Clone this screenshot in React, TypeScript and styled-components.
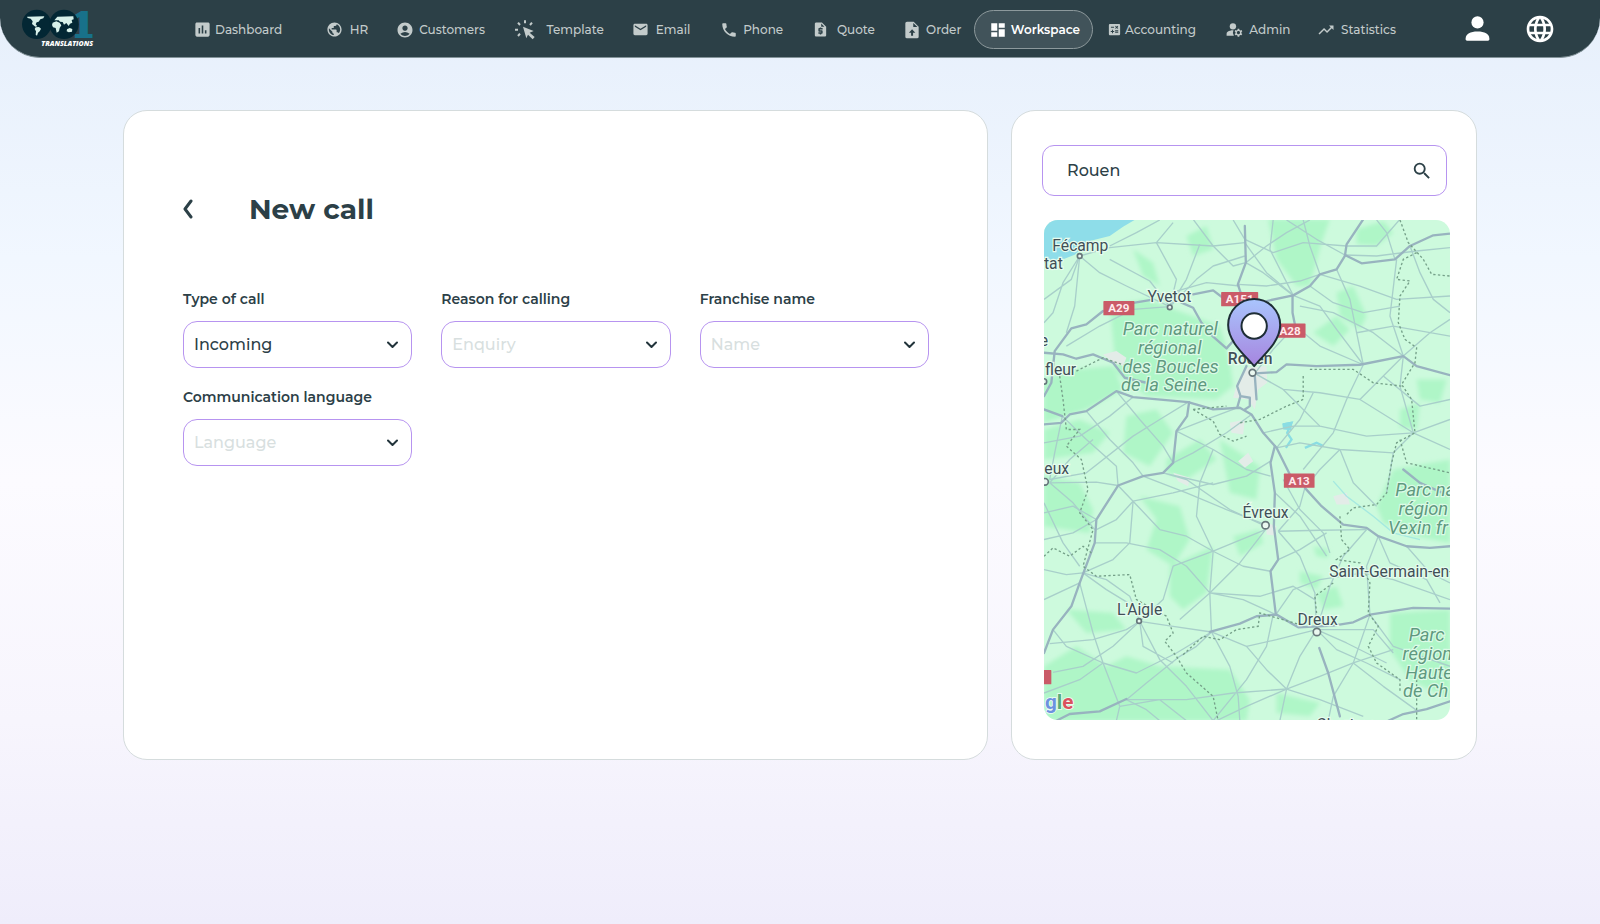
import React from "react";
import styled, { createGlobalStyle } from "styled-components";
import {
  MdAccountCircle,
  MdAssessment,
  MdCalculate,
  MdDashboard,
  MdEmail,
  MdLanguage,
  MdManageAccounts,
  MdPhone,
  MdPublic,
  MdRequestQuote,
  MdSearch,
  MdTrendingUp,
} from "react-icons/md";

const ink = "#2c4047";

const GlobalStyle = createGlobalStyle`
  *, *::before, *::after { box-sizing: border-box; }
  body {
    margin: 0;
    min-height: 100vh;
    font-family: Montserrat, Inter, sans-serif;
    color: ${ink};
    background: linear-gradient(180deg, #e6effb 0%, #f1f7ff 28%, #fcfbff 52%, #f7f5fd 78%, #efedfb 100%) no-repeat;
  }
`;

const Header = styled.header`
  display: flex;
  align-items: center;
  height: 58px;
  padding: 2px 44px 0 20px;
  background: ${ink};
  border-bottom: 1px solid #84949a;
  border-radius: 0 0 40px 40px;
`;

const LogoLink = styled.a`
  display: flex;
  width: 159px;
  padding-bottom: 3px;
  flex: none;
`;

const Nav = styled.nav`
  display: flex;
  flex: 1;
  min-width: 0;
`;

const NavItem = styled.a<{ $share: number; $gap: number; $active?: boolean }>`
  display: flex;
  align-items: center;
  flex: ${(p) => p.$share} 1 0;
  gap: ${(p) => p.$gap}px;
  height: 39px;
  padding-left: ${(p) => (p.$active ? 14 : 13)}px;
  border: 1px solid ${(p) => (p.$active ? "#8d999c" : "transparent")};
  border-radius: 20px;
  background: ${(p) => (p.$active ? "#41535a" : "transparent")};
  color: ${(p) => (p.$active ? "#ffffff" : "#c3cbcb")};
  font-size: 12px;
  font-weight: ${(p) => (p.$active ? 600 : 500)};
  line-height: 20px;
  text-decoration: none;
  white-space: nowrap;

  svg {
    flex: none;
  }
`;

const Actions = styled.div`
  display: flex;
  align-items: center;
  justify-content: flex-end;
  gap: 34px;
  flex: none;
  width: 144px;
  padding-bottom: 2px;
`;

const IconButton = styled.button`
  display: flex;
  align-items: center;
  justify-content: center;
  padding: 0;
  border: 0;
  background: none;
  color: inherit;
  cursor: pointer;
`;

const LightButton = styled(IconButton)`
  color: #ffffff;
`;

const Main = styled.main`
  display: grid;
  grid-template-columns: minmax(0, 865fr) minmax(0, 466fr);
  gap: 23px;
  padding: 52px 123px;
`;

const Card = styled.section`
  background: #ffffff;
  border: 1px solid #d5dcdd;
  border-radius: 24px;
`;

const FormCard = styled(Card)`
  padding: 79px 58px 80px 59px;
`;

const MapCard = styled(Card)`
  padding: 34px 26px 39px 30px;
`;

const TitleRow = styled.div`
  display: flex;
  align-items: center;
  gap: 56px;
  margin-bottom: 61px;
`;

const Title = styled.h1`
  margin: 0;
  font-size: 28px;
  font-weight: 700;
  line-height: 38px;
`;

const Fields = styled.form`
  display: grid;
  grid-template-columns: repeat(3, minmax(0, 1fr));
  gap: 19px 29px;
`;

const Field = styled.div`
  display: flex;
  flex-direction: column;
  gap: 12px;
`;

const Label = styled.label`
  font-size: 14px;
  font-weight: 600;
  line-height: 20px;
  white-space: nowrap;
`;

const SelectBox = styled.div`
  display: grid;
  align-items: center;

  > * {
    grid-area: 1 / 1;
  }

  svg {
    justify-self: end;
    margin-right: 14px;
    pointer-events: none;
  }
`;

const Select = styled.select<{ $empty: boolean }>`
  appearance: none;
  width: 100%;
  height: 47px;
  padding: 0 36px 0 10px;
  border: 1px solid #b794f0;
  border-radius: 14px;
  background: #ffffff;
  color: ${(p) => (p.$empty ? "#d8dfdf" : ink)};
  font-family: inherit;
  font-size: 16px;
  font-weight: 500;
`;

const SearchBox = styled.form`
  display: flex;
  align-items: center;
  height: 51px;
  margin: 0 3px 24px 0;
  padding: 0 13px 0 24px;
  border: 1px solid #b794f0;
  border-radius: 12px;
`;

const SearchInput = styled.input`
  flex: 1;
  min-width: 0;
  padding: 0;
  border: 0;
  outline: 0;
  background: none;
  color: ${ink};
  font-family: inherit;
  font-size: 16px;
  font-weight: 500;
`;

const MapFrame = styled.div`
  height: 500px;
  margin-left: 2px;
  border-radius: 14px;
  overflow: hidden;
`;

const MapSvg = styled.svg`
  display: block;
  width: 100%;
  height: 100%;
  font-family: Roboto, sans-serif;
`;

const ClickIcon = () => (
  <svg width="21" height="20" viewBox="400 62 63 60" fill="currentColor" aria-hidden="true">
    <path d="M427 82 459 95 447 100 462 113 456 120 442 106 437 117Z" />
    <g stroke="currentColor" strokeWidth="6">
      <path d="M433 63v9M448 77l6-7M418 77l-6-7M412 91h-9M418 103l-6 7" />
    </g>
  </svg>
);

const UploadFileIcon = () => (
  <svg width="20" height="20" viewBox="0 0 24 24" fill="currentColor" fillRule="evenodd" aria-hidden="true">
    <path d="M6 2a2 2 0 0 0-2 2v16a2 2 0 0 0 2 2h12a2 2 0 0 0 2-2V8l-6-6ZM13.500 3.500 18.500 8.500H13.500ZM13.300 15.200V19h-2.400v-3.800H8.300L12.100 11l3.900 4.200Z" />
  </svg>
);

const UserIcon = () => (
  <svg width="25" height="25" viewBox="855 46 74 74" fill="currentColor" aria-hidden="true">
    <circle cx="892" cy="65" r="18" />
    <path d="M857 112c0-12 14-20 35-20s35 8 35 20v3a4 4 0 0 1-4 4h-62a4 4 0 0 1-4-4Z" />
  </svg>
);

const Chevron = () => (
  <svg width="11" height="8" viewBox="0 0 11 8" fill="none" aria-hidden="true">
    <path d="M1 1.500 5.500 6 10 1.500" stroke="#22343b" strokeWidth="2" strokeLinecap="round" strokeLinejoin="round" />
  </svg>
);

const Logo = () => (
  <svg width="77" height="40" viewBox="30 24 231 120" role="img" aria-label="1001 Translations">
    <text x="184" y="112" fontFamily="'DejaVu Serif', serif" fontWeight="700" fontSize="102" fill="#18718a" stroke="#18718a" strokeWidth="6">1</text>
    <circle cx="80" cy="73" r="44" fill="#032734" />
    <circle cx="162" cy="73" r="44" fill="#032734" />
    <g fill="#d8f1ea">
      <path d="M51 50 103 49 100 55 91 58 86 65 80 67 77 73 82 79 76 80 66 72 68 64 62 56 53 54Z" />
      <path d="M77 82 87 81 93 86 89 94 84 98 81 107 77 104 78 94 74 87Z" />
      <path d="M133 61 142 50 190 49 191 58 185 60 187 68 180 71 176 78 169 69 162 74 158 66 150 65 146 61Z" />
      <path d="M128 68 139 64 149 68 154 76 149 84 147 94 140 98 137 84 129 82 126 75Z" />
      <path d="M171 88 179 84 187 87 186 95 176 97 170 94Z" />
    </g>
    <text x="94" y="137" fontFamily="'Open Sans', sans-serif" fontStyle="italic" fontWeight="800" fontSize="21" fill="#ffffff">TRANSLATIONS</text>
  </svg>
);

type NavEntry = { label: string; icon: React.ReactNode; share: number; gap: number; active?: boolean };

const navEntries: NavEntry[] = [
  { label: "Dashboard", icon: <MdAssessment size={19} />, share: 138, gap: 3 },
  { label: "HR", icon: <MdPublic size={17} />, share: 65, gap: 7 },
  { label: "Customers", icon: <MdAccountCircle size={18} />, share: 120, gap: 5 },
  { label: "Template", icon: <ClickIcon />, share: 121, gap: 12 },
  { label: "Email", icon: <MdEmail size={17} />, share: 86, gap: 7 },
  { label: "Phone", icon: <MdPhone size={18} />, share: 90, gap: 5 },
  { label: "Quote", icon: <MdRequestQuote size={17} />, share: 88, gap: 8 },
  { label: "Order", icon: <UploadFileIcon />, share: 83, gap: 4 },
  { label: "Workspace", icon: <MdDashboard size={18} />, share: 121, gap: 4, active: true },
  { label: "Accounting", icon: <MdCalculate size={15} />, share: 121, gap: 3 },
  { label: "Admin", icon: <MdManageAccounts size={19} />, share: 90, gap: 5 },
  { label: "Statistics", icon: <MdTrendingUp size={18} />, share: 110, gap: 6 },
];

const fields = [
  { id: "type", label: "Type of call", value: "Incoming", empty: false },
  { id: "reason", label: "Reason for calling", value: "Enquiry", empty: true },
  { id: "franchise", label: "Franchise name", value: "Name", empty: true },
  { id: "language", label: "Communication language", value: "Language", empty: true },
];

const forests = [
  "M805 360 L990 360 L965 430 L930 560 L890 560 L830 480Z",
  "M1070 390 L1150 365 L1180 400 L1130 440 L1070 435Z",
  "M1010 580 L1060 560 L1100 650 L1080 690 L1020 650Z",
  "M330 620 L440 600 L660 680 L690 780 L700 860 L650 900 L440 890 L350 820Z",
  "M133 840 L220 810 L340 800 L370 870 L260 930 L133 970Z",
  "M133 990 L240 960 L330 1000 L280 1060 L133 1080Z",
  "M380 950 L470 930 L520 1000 L450 1100 L370 1060Z",
  "M500 1080 L600 1020 L650 1080 L560 1140 L500 1120Z",
  "M1200 930 L1260 910 L1250 990 L1200 985Z",
  "M1250 840 L1340 840 L1320 910 L1260 900Z",
  "M940 700 L1010 650 L1050 690 L1000 740Z",
  "M133 1130 L240 1150 L280 1230 L270 1300 L133 1280Z",
  "M420 1190 L540 1220 L570 1320 L520 1400 L440 1350 L470 1260Z",
  "M510 1400 L640 1340 L620 1480 L550 1530 L510 1490Z",
  "M1180 1110 L1350 1080 L1350 1330 L1250 1310 L1150 1270 L1130 1220Z",
  "M1170 1540 L1350 1530 L1350 1800 L1230 1740 L1170 1650Z",
  "M133 1700 L230 1640 L320 1700 L380 1670 L480 1700 L690 1710 L750 1800 L740 1863 L133 1863Z",
  "M950 1480 L1010 1460 L1030 1520 L970 1530Z",
  "M700 1310 L780 1290 L790 1330 L720 1370Z",
  "M200 1530 L340 1540 L380 1590 L260 1600Z",
  "M660 1020 L780 1100 L770 1200 L690 1180Z",
  "M830 1780 L960 1810 L930 1850 L830 1840Z",
  "M560 410 L620 380 L640 450 L580 470Z",
  "M400 450 L460 490 L480 560 L430 530Z",
  "M900 1415 L970 1430 L950 1470 L900 1450Z",
  "M940 1340 L985 1350 L985 1375 L950 1370Z",
];

const highways = [
  "M133 890 L155 850 L165 755 L215 687 L260 675 L310 635 M405 610 L450 602 M545 610 L580 625 L605 670 L640 712 L680 747 L722 700",
  "M735 380 L738 490 L714 555 L726 590",
  "M580 585 L640 573 L670 596 M800 605 L880 588 L930 560 L960 525 L1010 510 L1035 470 L1040 435 L1090 360",
  "M1035 467 L1085 492 L1185 480 L1230 440 L1300 408 L1350 403",
  "M878 588 L878 640 L886 680",
  "M765 822 L830 818 L860 795 L950 800 L1080 796 L1210 770 L1250 800 L1350 827",
  "M133 975 L185 970 L210 945 L260 935 L350 875 L400 893 L565 908 L640 930 L720 925 L755 945 L790 1000 L830 1045 L870 1125",
  "M568 908 L562 950 L530 995 L520 1090 L490 1120 L430 1130 L355 1158 L290 1260 L285 1330 L240 1450 L215 1520 L160 1590 L133 1660",
  "M133 760 L190 765 L230 778 L280 765 L340 790 L375 835 L440 850",
  "M825 1040 L812 1090 L825 1180 L822 1280 L835 1380 L812 1415 L828 1545",
  "M915 1165 L965 1220 L1030 1275 L1100 1285 L1135 1310 L1220 1340 L1290 1345 L1350 1340",
  "M630 1597 L720 1572 L770 1550 L830 1545 L895 1583 L1000 1578 L1060 1568 L1110 1545 L1240 1525 L1350 1527",
  "M958 1645 L985 1720 L1020 1850",
  "M170 1863 L210 1843 L300 1835 L380 1798",
  "M1165 1863 L1210 1843 L1280 1828 L1350 1805",
  "M740 800 L712 860 L722 890 L712 925 M765 830 L770 900 M722 890 L750 895 L750 920 L735 930",
  "M133 930 L188 950 M1210 1110 L1260 1150 L1350 1190",
];

const roads = [
  "M240 470 L300 520 L380 560 L510 622 M240 470 L215 540 L133 600 M240 470 L190 550 L160 640 L133 670",
  "M240 470 L330 445 L470 430 L640 440 L735 430 M240 470 L225 620 L200 700",
  "M330 440 L410 400 L480 362 M470 430 L520 370 M470 430 L530 540 L510 622 M600 435 L560 540 L510 622",
  "M510 622 L590 540 L640 500 L735 470 M510 622 L450 545 L330 480 M510 622 L400 630 L300 680 L200 740",
  "M640 440 L580 360 M640 440 L700 500 L738 490 M738 490 L800 440 L860 400 L930 362",
  "M738 490 L790 520 L880 588 M700 362 L735 420 L820 460 L910 430 L1040 440",
  "M714 555 L800 560 L900 545 L960 525 M880 588 L800 520 L735 430 M720 560 L620 550 L530 575",
  "M910 362 L930 440 L960 525 M820 362 L810 450 L880 588 M1035 467 L950 420 L860 362",
  "M1035 467 L1130 470 L1250 455 L1350 445 M1040 440 L1130 440 L1200 360 M1185 480 L1160 400 L1130 362",
  "M1230 440 L1260 520 L1300 600 L1350 640 M1010 510 L1050 600 L1070 700 L1090 796",
  "M880 588 L960 620 L1010 690 L1090 796 M886 680 L960 740 L1090 796 M960 525 L1080 560 L1190 600 L1350 590",
  "M1210 770 L1170 650 L1190 480 M1210 770 L1290 700 L1350 660 M1070 700 L1180 680 L1350 710",
  "M1210 770 L1120 700 L1000 640 L900 620 M930 560 L1000 610 L1090 640 L1200 620",
  "M765 822 L820 750 L886 680 M765 822 L850 870 L960 880 L1080 900 L1240 1000",
  "M1240 1000 L1200 860 L1210 770 M1240 1000 L1350 960 M1240 1000 L1350 1050 M1240 1000 L1180 1060 L1160 1180",
  "M1240 1000 L1100 1010 L960 980 L850 870 M1090 796 L1040 900 L1000 1000 L910 1110",
  "M830 1045 L900 1030 L1020 1050 L1180 1060 M830 1045 L900 960 L940 880 M790 1000 L880 980 L960 980",
  "M1020 1050 L960 1110 L920 1160 M1020 1050 L1060 1150 L1130 1220 M1080 900 L1150 830 L1210 770 M1350 900 L1260 920 L1150 830",
  "M188 950 L260 1020 L350 1100 L355 1158 M188 950 L165 1060 L150 1140 M260 935 L330 1020 L400 1090 L430 1130",
  "M350 875 L420 960 L490 1040 L520 1090 M400 893 L330 950 L240 1010 L133 1030 M565 908 L480 960 L400 1010 L260 1120 L150 1140",
  "M150 1150 L290 1148 L355 1158 M150 1150 L220 1210 L285 1290 M150 1150 L210 1080 L280 1020",
  "M530 995 L620 960 L712 925 M530 995 L640 1050 L740 1110 L812 1130 M520 1090 L580 1060 L680 1000 L755 945",
  "M490 1120 L640 1155 L740 1130 L812 1085 M490 1120 L560 1140 L690 1230 L797 1280",
  "M430 1130 L560 1180 L680 1230 L797 1275 M400 1205 L520 1180 L640 1150 M400 1205 L355 1158 M400 1205 L350 1260 L290 1290",
  "M400 1205 L480 1290 L560 1310 L640 1355 M400 1205 L390 1330 L340 1380 L250 1420",
  "M797 1290 L700 1330 L640 1355 L520 1400 L490 1500 L420 1565 M797 1290 L720 1390 L630 1480 L540 1560",
  "M640 1355 L630 1480 L635 1597 M640 1355 L590 1250 L600 1150 L640 1050 M630 1480 L560 1400 L480 1350 L380 1330 L285 1330",
  "M630 1480 L730 1500 L828 1545 M630 1480 L780 1490 L880 1460 L945 1500 M812 1415 L730 1400 L640 1355",
  "M835 1295 L960 1292 L1100 1290 M835 1295 L900 1220 L915 1165 M835 1295 L900 1370 L945 1480 L950 1590",
  "M850 1140 L900 1230 L970 1300 L990 1360 M825 1180 L900 1250 L980 1370 M1100 1290 L1030 1370 L990 1460 L950 1590",
  "M835 1380 L900 1350 L980 1300 M828 1545 L880 1470 L960 1440 L1090 1420 L1180 1440 L1350 1500",
  "M1135 1310 L1170 1390 L1280 1440 L1320 1510 M1135 1310 L1100 1400 L1110 1545 M1220 1340 L1290 1420 L1350 1450",
  "M133 1320 L220 1300 L290 1260 M133 1410 L200 1425 L250 1420 L320 1470 L385 1510 M133 1240 L220 1220 L290 1260",
  "M250 1420 L320 1440 L390 1490 L420 1565 M420 1565 L520 1580 L635 1597 M420 1565 L380 1590 L280 1620 L150 1632",
  "M420 1565 L340 1640 L250 1700 L160 1718 M420 1565 L480 1680 L560 1760 L640 1863 M420 1565 L430 1640 L520 1690",
  "M240 1450 L280 1600 L310 1690 L360 1820 M310 1690 L410 1720 L530 1660 L635 1597 M310 1690 L200 1640 L160 1590",
  "M635 1597 L590 1640 L540 1670 L440 1750 L380 1800 M635 1597 L740 1640 L800 1710 L860 1768",
  "M635 1597 L690 1700 L715 1790 L720 1863 M860 1768 L740 1820 L650 1863 M860 1768 L960 1800 L1090 1850",
  "M860 1768 L900 1670 L950 1590 M860 1768 L960 1730 L1060 1690 L1180 1650 M860 1768 L840 1863 M740 1640 L830 1620 L950 1590",
  "M860 1768 L700 1780 L560 1800 L380 1800 M640 1863 L740 1740 L800 1640 L820 1545 M360 1820 L480 1800 L560 1863",
  "M950 1590 L1010 1650 L1100 1690 L1200 1740 M950 1590 L1040 1630 L1160 1690 M950 1590 L1120 1590 L1180 1660",
  "M1110 1545 L1060 1690 L1000 1790 L985 1863 M1060 1690 L1150 1760 L1250 1832 M1110 1545 L1180 1640 L1350 1700",
  "M380 1800 L440 1830 L480 1863 M360 1820 L350 1863 M133 1780 L240 1740 L310 1690 M133 1500 L240 1450 M133 1210 L190 1330 L240 1400",
];

const boundaries = [
  "M1200 362 L1225 430 L1270 480 L1295 525 L1350 530 M1250 460 L1210 480 L1190 540 L1230 545 L1200 590 L1195 670 L1215 720 L1250 745 L1245 790 L1205 855 L1235 900 L1245 1000 L1190 1030 L1175 1090 L1160 1180 L1130 1215 L1060 1225 L1040 1245",
  "M1200 1020 L1220 1090 L1350 1120 M910 830 L910 900 L860 920 L780 960 L720 970 M930 810 L1060 810 L1120 850 L1205 860",
  "M580 930 L640 965 L660 1005 L700 1025 L740 1010 M580 930 L680 920 M180 830 L190 900 L200 990 L240 990 L200 1040 L245 1080 L265 1170 L240 1240 L280 1290 L250 1400 L290 1430 L390 1425 L410 1500 L500 1550 L520 1600 L495 1625 L530 1670 L560 1720 L640 1790 L655 1863",
  "M133 1370 L160 1345 L210 1370 L250 1340 L275 1360 M550 1665 L610 1610 L660 1620 L710 1590 L775 1580 L780 1540 L900 1575",
  "M1020 1250 L1025 1320 L1050 1350 L1010 1380 L1080 1390 L1110 1450 L1105 1540 L1135 1580 L1105 1640 L1130 1690 L1200 1740 L1200 1780 M1000 1450 L945 1490 L950 1540 M1250 1740 L1250 1863",
  "M230 815 L310 775 L380 800",
];

const towns = [
  { name: "Fécamp", x: 158, y: 454, dot: [240, 470, 7] },
  { name: "tat", x: 133, y: 509 },
  { name: "Yvetot", x: 443, y: 607, dot: [510, 624, 7] },
  { name: "e", x: 120, y: 740 },
  { name: "fleur", x: 136, y: 827, dot: [133, 846, 8] },
  { name: "eux", x: 134, y: 1124, dot: [136, 1147, 10] },
  { name: "Évreux", x: 728, y: 1255, dot: [797, 1277, 11] },
  { name: "Saint-Germain-en-", x: 988, y: 1432 },
  { name: "L'Aigle", x: 352, y: 1546, dot: [418, 1564, 7] },
  { name: "Dreux", x: 893, y: 1575, dot: [951, 1597, 11] },
  { name: "Chartres", x: 950, y: 1890 },
];

const parks = [
  { name: "Parc naturel", x: 369, y: 708 },
  { name: "régional", x: 415, y: 764 },
  { name: "des Boucles", x: 368, y: 820 },
  { name: "de la Seine…", x: 364, y: 876 },
  { name: "Parc na", x: 1186, y: 1190 },
  { name: "région", x: 1196, y: 1247 },
  { name: "Vexin fr", x: 1164, y: 1302 },
  { name: "Parc", x: 1226, y: 1625 },
  { name: "région", x: 1208, y: 1681 },
  { name: "Haute", x: 1216, y: 1737 },
  { name: "de Ch", x: 1209, y: 1792 },
];

const shields = [
  { name: "A29", x: 311, y: 605, w: 93 },
  { name: "A151", x: 664, y: 578, w: 111 },
  { name: "A28", x: 824, y: 672, w: 93 },
  { name: "A13", x: 852, y: 1122, w: 92 },
  { name: "", x: 90, y: 1711, w: 65 },
];

const RegionMap = () => (
  <MapSvg viewBox="133 360 1217 1503" preserveAspectRatio="xMidYMid slice" role="img" aria-label="Map of the area around Rouen">
    <defs>
      <linearGradient id="pinFill" x1="0" y1="0" x2="0" y2="1">
        <stop offset="0" stopColor="#a9c5fd" />
        <stop offset="1" stopColor="#a685df" />
      </linearGradient>
      <filter id="forestEdge">
        <feGaussianBlur stdDeviation="7" />
      </filter>
    </defs>
    <rect x="133" y="360" width="1217" height="1503" fill="#cdfadd" />
    <g fill="#aff6c7" filter="url(#forestEdge)">
      {forests.map((d) => <path key={d} d={d} />)}
    </g>
    <path d="M133 360 H408 L370 382 L330 410 L270 425 L225 466 L185 482 L133 492Z" fill="#8edde9" />
    <g fill="#e3ece8">
      <path d="M735 805 L800 800 L802 850 L775 870 L765 930 L745 900 L700 895 L712 850Z" />
      <path d="M690 970 L735 960 L730 1005 L695 1000Z M310 765 L350 755 L380 775 L370 800 L340 790Z M715 1085 L745 1060 L760 1085 L735 1105Z M520 1120 L570 1135 L565 1160 L535 1145Z M800 1270 L830 1280 L825 1308 L800 1305Z M1000 1190 L1040 1180 L1050 1215 L1010 1215Z" />
    </g>
    <g fill="none" stroke="#8adde3" strokeWidth="7">
      <path d="M850 975 L875 970 L862 1000 L875 1020 L858 1045 M915 1045 L950 1030 L970 1040" />
      <path d="M1000 1145 L1040 1190 L1120 1250 L1180 1300 L1260 1320" strokeWidth="4" opacity="0.6" />
    </g>
    <path d="M847 972 L878 966 L874 992 L850 990Z" fill="#8adde3" />
    <g fill="none" stroke="#a8cfca" strokeWidth="4" strokeLinejoin="round">
      {roads.map((d) => <path key={d} d={d} />)}
    </g>
    <g fill="none" stroke="#98b3bf" strokeWidth="7" strokeLinejoin="round" strokeLinecap="round">
      {highways.map((d) => <path key={d} d={d} />)}
    </g>
    <g fill="none" stroke="#75a089" strokeWidth="4" strokeDasharray="7 7">
      {boundaries.map((d) => <path key={d} d={d} />)}
    </g>
    {shields.map((s) => (
      <g key={s.x}>
        <rect x={s.x} y={s.y} width={s.w} height="43" rx="2" fill="#ca5b68" />
        <text x={s.x + s.w / 2} y={s.y + 34} textAnchor="middle" fontSize="35" fontWeight="700" fill="#ffe9ec">{s.name}</text>
      </g>
    ))}
    <g fontSize="55" fontStyle="italic" fill="#5f997f" stroke="#dcfbe7" strokeWidth="7" paintOrder="stroke">
      {parks.map((p) => <text key={p.y} x={p.x} y={p.y}>{p.name}</text>)}
    </g>
    <g fontSize="47" fill="#414f57" stroke="#e6fcee" strokeWidth="7" paintOrder="stroke">
      {towns.map((t) => <text key={t.name} x={t.x} y={t.y}>{t.name}</text>)}
      <text x="684" y="794" fontWeight="500">Rouen</text>
    </g>
    <g fill="#eaf8f0" stroke="#67777b" strokeWidth="5">
      {towns.map((t) => t.dot && <circle key={t.name} cx={t.dot[0]} cy={t.dot[1]} r={t.dot[2]} />)}
      <circle cx="758" cy="820" r="10" />
    </g>
    <g fontSize="62" fontWeight="700" stroke="#f1fdf5" strokeWidth="5" paintOrder="stroke">
      <text x="136" y="1828">
        <tspan fill="#6c92df">g</tspan>
        <tspan fill="#55ad79">l</tspan>
        <tspan fill="#d9525e">e</tspan>
      </text>
    </g>
    <g stroke="#1d2d35" strokeWidth="6" strokeLinejoin="round">
      <path d="M763 800 C738 770 685 728 685 677 A78 78 0 0 1 841 677 C841 728 788 770 763 800Z" fill="url(#pinFill)" />
      <circle cx="763" cy="680" r="38" fill="#ffffff" />
    </g>
  </MapSvg>
);

export default function App() {
  return (
    <>
      <GlobalStyle />
      <Header>
        <LogoLink href="#home">
          <Logo />
        </LogoLink>
        <Nav aria-label="Main">
          {navEntries.map((n) => (
            <NavItem key={n.label} href={"#" + n.label.toLowerCase()} $share={n.share} $gap={n.gap} $active={n.active} aria-current={n.active ? "page" : undefined}>
              {n.icon}
              {n.label}
            </NavItem>
          ))}
        </Nav>
        <Actions>
          <LightButton type="button" aria-label="Profile">
            <UserIcon />
          </LightButton>
          <LightButton type="button" aria-label="Site language">
            <MdLanguage size={32} />
          </LightButton>
        </Actions>
      </Header>
      <Main>
        <FormCard>
          <TitleRow>
            <IconButton type="button" aria-label="Back">
              <svg width="10" height="20" viewBox="0 0 10 20" fill="none">
                <path d="M8 2 2 10 8 18" stroke={ink} strokeWidth="3" strokeLinecap="round" strokeLinejoin="round" />
              </svg>
            </IconButton>
            <Title>New call</Title>
          </TitleRow>
          <Fields>
            {fields.map((f) => (
              <Field key={f.id}>
                <Label htmlFor={f.id}>{f.label}</Label>
                <SelectBox>
                  <Select id={f.id} $empty={f.empty} defaultValue={f.value}>
                    <option>{f.value}</option>
                  </Select>
                  <Chevron />
                </SelectBox>
              </Field>
            ))}
          </Fields>
        </FormCard>
        <MapCard>
          <SearchBox role="search">
            <SearchInput type="text" aria-label="Search a place" defaultValue="Rouen" />
            <IconButton type="submit" aria-label="Search">
              <MdSearch size={22} />
            </IconButton>
          </SearchBox>
          <MapFrame>
            <RegionMap />
          </MapFrame>
        </MapCard>
      </Main>
    </>
  );
}
